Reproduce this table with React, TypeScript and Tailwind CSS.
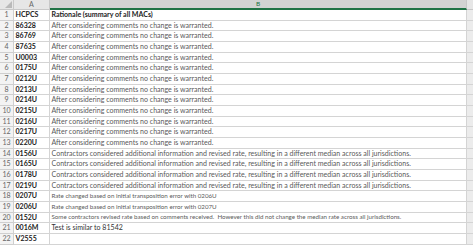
import React from "react";

const A = "After considering comments no change is warranted.";
const C = "Contractors considered additional information and revised rate, resulting in a different median across all jurisdictions.";

const rows: [string, string][] = [
  ["HCPCS", "Rationale (summary of all MACs)"],
  ["86328", A],
  ["86769", A],
  ["87635", A],
  ["U0003", A],
  ["0175U", A],
  ["0212U", A],
  ["0213U", A],
  ["0214U", A],
  ["0215U", A],
  ["0216U", A],
  ["0217U", A],
  ["0220U", A],
  ["0156U", C],
  ["0165U", C],
  ["0178U", C],
  ["0219U", C],
  ["0207U", "Rate changed based on initial transposition error with 0206U"],
  ["0206U", "Rate changed based on initial transposition error with 0207U"],
  ["0152U", "Some contractors revised rate based on comments received.\u00a0 However this did not change the median rate across all jurisdictions."],
  ["0016M", "Test is similar to 81542"],
  ["V2555", ""],
];

const heights = ["h-[11px]", "h-[10px]", "h-[11px]"];

export default function App() {
  return (
    <div
      className="w-[473px] h-[245px] overflow-hidden bg-white text-[7.05px] leading-none"
      style={{ fontFamily: "Lato, 'Open Sans', sans-serif" }}
    >
      {/* column header */}
      <div className="flex h-[10px]">
        <div className="w-[14px] bg-[#e6e6e6] border-r border-b border-[#c8c8c8] relative">
          <div className="absolute right-[1px] bottom-[1px] w-0 h-0 border-l-[7px] border-l-transparent border-b-[7px] border-b-[#b9b9b9]" />
        </div>
        <div className="w-[36px] bg-[#e6e6e6] border-r border-b border-[#c8c8c8] flex items-center justify-center text-[#666]">
          A
        </div>
        <div className="w-[417px] bg-[#d3d3d3] border-r border-b-2 border-b-[#217346] border-r-[#c8c8c8] flex items-center justify-center text-[#217346] text-[6.5px]">
          B
        </div>
        <div className="flex-1 bg-[#e6e6e6] border-b border-[#c8c8c8]" />
      </div>
      {rows.map((r, i) => {
        const bold = i === 0;
        const dark = i === 20;
        const small = i >= 17 && i <= 19;
        return (
          <div key={i} className={`flex ${heights[i % 3]}`}>
            <div className="w-[14px] bg-[#f3f3f3] border-r border-b border-[#cfcfcf] flex items-center justify-center text-[#666]">
              {i + 1}
            </div>
            <div className="w-[36px] border-r border-b border-[#d4d4d4] flex items-center pl-[1.5px] font-bold text-[#222] whitespace-nowrap overflow-hidden">
              {r[0]}
            </div>
            <div
              className={`w-[417px] border-r border-b border-[#d4d4d4] flex items-center pl-[1.5px] whitespace-nowrap overflow-hidden ${
                bold ? "font-bold text-[#222]" : dark ? "text-[#333]" : "text-[#5a5a5a]"
              } ${small ? "text-[6.2px]" : ""}`}
            >
              {r[1]}
            </div>
            <div className="flex-1 bg-[#ececec] border-b border-[#d4d4d4]" />
          </div>
        );
      })}
    </div>
  );
}
